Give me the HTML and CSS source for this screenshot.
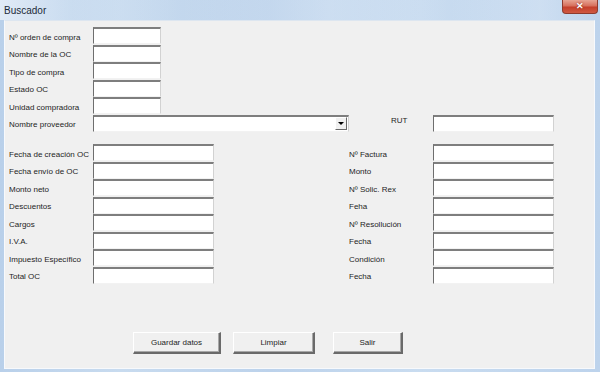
FILE: index.html
```html
<!DOCTYPE html>
<html lang="es">
<head>
<meta charset="utf-8">
<title>Buscador</title>
<link rel="stylesheet" href="styles.css">
</head>
<body>
<div class="window">
  <div class="titlebar">
    <span class="title">Buscador</span>
    <span class="close">✕</span>
  </div>
  <div class="client">
    <div class="sec1">
      <label class="lbl">Nº orden de compra</label><div class="box w68"></div>
      <label class="lbl">Nombre de la OC</label><div class="box w68"></div>
      <label class="lbl">Tipo de compra</label><div class="box w68"></div>
      <label class="lbl">Estado OC</label><div class="box w68"></div>
      <label class="lbl">Unidad compradora</label><div class="box w68"></div>
      <div class="row-prov">
        <label class="lbl">Nombre proveedor</label>
        <div class="box combo"><span class="drop"><span class="tri"></span></span></div>
        <label class="lbl rut">RUT</label>
        <div class="box w121"></div>
      </div>
    </div>
    <div class="sec2">
      <label class="lbl">Fecha de creación OC</label><div class="box w121"></div><span></span>
      <label class="lbl">Nº Factura</label><div class="box w121"></div>
      <label class="lbl">Fecha envío de OC</label><div class="box w121"></div><span></span>
      <label class="lbl">Monto</label><div class="box w121"></div>
      <label class="lbl">Monto neto</label><div class="box w121"></div><span></span>
      <label class="lbl">Nº Solic. Rex</label><div class="box w121"></div>
      <label class="lbl">Descuentos</label><div class="box w121"></div><span></span>
      <label class="lbl">Feha</label><div class="box w121"></div>
      <label class="lbl">Cargos</label><div class="box w121"></div><span></span>
      <label class="lbl">Nº Resollución</label><div class="box w121"></div>
      <label class="lbl">I.V.A.</label><div class="box w121"></div><span></span>
      <label class="lbl">Fecha</label><div class="box w121"></div>
      <label class="lbl">Impuesto Específico</label><div class="box w121"></div><span></span>
      <label class="lbl">Condición</label><div class="box w121"></div>
      <label class="lbl">Total OC</label><div class="box w121"></div><span></span>
      <label class="lbl">Fecha</label><div class="box w121"></div>
    </div>
    <div class="buttons">
      <button class="btn b1">Guardar datos</button>
      <button class="btn b2">Limpiar</button>
      <button class="btn b3">Salir</button>
    </div>
  </div>
</div>
</body>
</html>
```
FILE: styles.css
```css
html, body {
  margin: 0;
  padding: 0;
}
body {
  width: 600px;
  height: 372px;
  overflow: hidden;
  font-family: "Liberation Sans", Arial, sans-serif;
}
.window {
  width: 600px;
  height: 372px;
  display: flex;
  flex-direction: column;
  background: linear-gradient(90deg, #b9d0ea 0%, #c8dbef 20%, #bcd2eb 45%, #c9dcf0 70%, #bdd3ec 100%);
  box-sizing: border-box;
}
.titlebar {
  height: 20px;
  display: flex;
  justify-content: space-between;
  align-items: flex-start;
  background: linear-gradient(90deg, rgba(235,242,250,0.8) 0%, rgba(220,233,246,0.3) 12%, rgba(200,218,238,0) 30%, rgba(225,236,248,0.35) 55%, rgba(200,218,238,0) 75%, rgba(225,236,248,0.4) 90%, rgba(200,218,238,0) 100%);
}
.title {
  font-size: 10px;
  color: #1c2a3a;
  margin: 5px 0 0 4px;
}
.close {
  width: 36px;
  height: 14px;
  margin-right: 2px;
  box-sizing: border-box;
  border: 1px solid #8e3b2e;
  border-top: none;
  border-radius: 0 0 4px 4px;
  background: linear-gradient(#e7a493 0%, #d7705d 45%, #c53f2b 55%, #cf5a43 100%);
  color: #fff;
  font-size: 9px;
  font-weight: bold;
  line-height: 13px;
  text-align: center;
  text-shadow: 0 0 2px #7a1f12;
}
.client {
  flex: 1;
  margin: 0 5px 3px 4px;
  background: #f0f0f0;
  border: 1px solid #f7f9fc;
  border-top-color: #dde6f0;
  padding: 6px 0 0 4px;
}
.lbl {
  font-size: 8px;
  color: #1e1e1e;
  display: flex;
  align-items: center;
  padding-top: 3px;
  white-space: nowrap;
}
.box {
  height: 17px;
  box-sizing: border-box;
  background: #fff;
  border-style: solid;
  border-width: 2px 1px 1px 1px;
  border-color: #7e7e7e #d2d2d2 #f2f2f2 #6e6e6e;
}
.w68 { width: 68px; }
.w121 { width: 121px; }
.sec1 {
  display: grid;
  grid-template-columns: 84px 68px;
  grid-auto-rows: 17.5px;
}
.row-prov {
  grid-column: 1 / -1;
  display: grid;
  grid-template-columns: 84px 256px 42px 42px 121px;
  width: 545px;
}
.combo {
  width: 256px;
  display: flex;
  justify-content: flex-end;
  align-items: center;
  padding-right: 1px;
}
.drop {
  width: 12px;
  height: 13px;
  box-sizing: border-box;
  background: #f0f0f0;
  border-style: solid;
  border-width: 1px;
  border-color: #ffffff #696969 #696969 #ffffff;
  display: flex;
  align-items: center;
  justify-content: center;
}
.tri {
  width: 0;
  height: 0;
  border-left: 3px solid transparent;
  border-right: 3px solid transparent;
  border-top: 3px solid #000;
}
.rut {
  grid-column: 4;
  padding-top: 0;
  padding-bottom: 6px;
}
.row-prov .rut + .box { grid-column: 5; }
.sec2 {
  margin-top: 12px;
  display: grid;
  grid-template-columns: 84px 121px 135px 84px 121px;
  grid-auto-rows: 17.5px;
}
.buttons {
  margin-top: 48px;
  display: flex;
  padding-left: 124px;
}
.btn {
  height: 22px;
  box-sizing: border-box;
  background: #f0f0f0;
  font-family: "Liberation Sans", Arial, sans-serif;
  font-size: 8px;
  color: #1e1e1e;
  border-style: solid;
  border-width: 1px 2px 2px 1px;
  border-color: #ffffff #6a6a6a #6a6a6a #ffffff;
  box-shadow: inset -1px -1px 0 #a8a8a8;
  padding: 0;
}
.b1 { width: 88px; }
.b2 { width: 82px; margin-left: 12px; }
.b3 { width: 70px; margin-left: 18px; }
```
